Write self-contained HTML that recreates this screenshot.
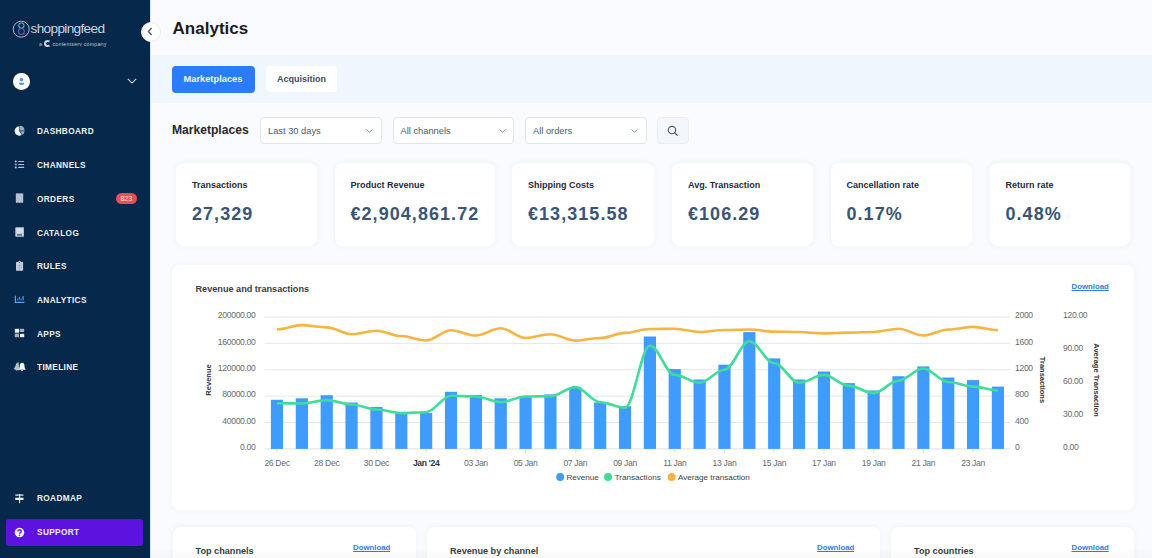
<!DOCTYPE html>
<html><head><meta charset="utf-8">
<style>
*{box-sizing:border-box;margin:0;padding:0}
html,body{width:1152px;height:558px;overflow:hidden;background:#f9fbfe;font-family:"Liberation Sans",sans-serif}
.abs{position:absolute;white-space:nowrap}
#side{position:absolute;left:0;top:0;width:150px;height:558px;background:#06284b}
.nav{position:absolute;left:37px;font-size:9.2px;font-weight:700;color:#eef1f5;letter-spacing:0.4px;line-height:10px;transform:scaleX(0.9);transform-origin:0 0}
.ico{position:absolute}
.card{position:absolute;background:#fff;border-radius:8px;box-shadow:0 0 6px rgba(40,70,120,0.06)}
.klab{position:absolute;left:16px;top:16.3px;font-size:9px;font-weight:700;color:#1e2b3c;line-height:12px}
.kval{position:absolute;left:16px;top:39.7px;font-size:18px;font-weight:700;color:#3a5577;letter-spacing:1.05px;line-height:22px}
.dd{position:absolute;top:117px;height:26.5px;width:121.5px;background:#fff;border:1px solid #dde6f1;border-radius:4px}
.dd span{position:absolute;left:7px;top:7.5px;font-size:9.3px;color:#4b5a6c;line-height:11px}
.dd svg{position:absolute;right:7.5px;top:11px}
.ax{font-family:"Liberation Sans",sans-serif;font-size:8.6px;letter-spacing:-0.33px;fill:#666b70}
.axb{font-weight:700;fill:#333}
.axt{font-family:"Liberation Sans",sans-serif;font-size:7.5px;font-weight:700;fill:#333}
.lg{font-family:"Liberation Sans",sans-serif;font-size:8.1px;fill:#3b3f44}
.dl{position:absolute;font-size:7.8px;font-weight:700;color:#2f7de1;text-decoration:underline;line-height:10px}
.ctitle{position:absolute;font-size:9.15px;font-weight:700;color:#3a3d42;line-height:11px}
</style></head><body>

<!-- main background bands -->
<div class="abs" style="left:150px;top:55px;width:1002px;height:48px;background:#eff6fe"></div>
<div class="abs" style="left:150px;top:0;width:1px;height:558px;background:#dfe3e8"></div>

<div class="abs" style="left:172.6px;top:19px;font-size:17px;font-weight:700;color:#1c1c1e;line-height:20px">Analytics</div>

<div class="abs" style="left:172px;top:65.5px;width:82.5px;height:27px;background:#2a7cfd;border-radius:4px"></div>
<div class="abs" style="left:183.5px;top:74px;font-size:9.3px;font-weight:700;color:#f2f7ff;line-height:11px">Marketplaces</div>
<div class="abs" style="left:266px;top:66px;width:71px;height:25.5px;background:#fff;border-radius:4px"></div>
<div class="abs" style="left:277px;top:74px;font-size:9px;font-weight:700;color:#3c4b63;line-height:11px">Acquisition</div>

<div class="abs" style="left:172px;top:123px;font-size:12.1px;font-weight:700;color:#26282c;line-height:14px">Marketplaces</div>

<div class="dd" style="left:260px"><span>Last 30 days</span><svg width="7" height="4" viewBox="0 0 7 4"><path d="M0.5 0.5 L3.5 3.3 L6.5 0.5" fill="none" stroke="#7d8da3" stroke-width="1"/></svg></div>
<div class="dd" style="left:392.5px"><span>All channels</span><svg width="7" height="4" viewBox="0 0 7 4"><path d="M0.5 0.5 L3.5 3.3 L6.5 0.5" fill="none" stroke="#7d8da3" stroke-width="1"/></svg></div>
<div class="dd" style="left:525px"><span>All orders</span><svg width="7" height="4" viewBox="0 0 7 4"><path d="M0.5 0.5 L3.5 3.3 L6.5 0.5" fill="none" stroke="#7d8da3" stroke-width="1"/></svg></div>
<div class="abs" style="left:657px;top:117px;width:32px;height:26.5px;background:#f3f6fa;border:1px solid #e9eef4;border-radius:4px">
  <svg width="12" height="12" viewBox="0 0 12 12" style="position:absolute;left:9px;top:6.5px"><circle cx="5" cy="5" r="3.7" fill="none" stroke="#4a5b73" stroke-width="1.15"/><path d="M7.7 7.7 L10.6 10.6" stroke="#4a5b73" stroke-width="1.3"/></svg>
</div>

<!-- KPI cards -->
<div class="card" style="left:176px;top:163px;width:141px;height:82.5px"><div class="klab">Transactions</div><div class="kval">27,329</div></div>
<div class="card" style="left:334.5px;top:163px;width:160px;height:82.5px"><div class="klab">Product Revenue</div><div class="kval">€2,904,861.72</div></div>
<div class="card" style="left:512px;top:163px;width:142px;height:82.5px"><div class="klab">Shipping Costs</div><div class="kval">€13,315.58</div></div>
<div class="card" style="left:672px;top:163px;width:140.5px;height:82.5px"><div class="klab">Avg. Transaction</div><div class="kval">€106.29</div></div>
<div class="card" style="left:830.5px;top:163px;width:141px;height:82.5px"><div class="klab">Cancellation rate</div><div class="kval">0.17%</div></div>
<div class="card" style="left:989.5px;top:163px;width:140.5px;height:82.5px"><div class="klab">Return rate</div><div class="kval">0.48%</div></div>

<!-- chart card -->
<div class="card" style="left:172px;top:265px;width:962px;height:245px"></div>
<div class="ctitle" style="left:195.5px;top:284px">Revenue and transactions</div>
<div class="dl" style="left:1071.5px;top:281.5px">Download</div>

<!-- bottom cards -->
<div class="card" style="left:172.5px;top:526.5px;width:243px;height:60px"></div>
<div class="card" style="left:427px;top:526.5px;width:452.5px;height:60px"></div>
<div class="card" style="left:891px;top:526.5px;width:243px;height:60px"></div>
<div class="ctitle" style="left:195.5px;top:545.5px">Top channels</div>
<div class="dl" style="left:353px;top:542.5px">Download</div>
<div class="ctitle" style="left:450px;top:545.5px">Revenue by channel</div>
<div class="dl" style="left:817px;top:542.5px">Download</div>
<div class="ctitle" style="left:914px;top:545.5px">Top countries</div>
<div class="dl" style="left:1071.5px;top:542.5px">Download</div>

<svg width="1152" height="558" viewBox="0 0 1152 558" style="position:absolute;left:0;top:0;pointer-events:none">
<line x1="264.6" y1="317.0" x2="1010.2" y2="317.0" stroke="#e6e6e6" stroke-width="1"/>
<line x1="264.6" y1="343.38" x2="1010.2" y2="343.38" stroke="#e6e6e6" stroke-width="1"/>
<line x1="264.6" y1="369.76" x2="1010.2" y2="369.76" stroke="#e6e6e6" stroke-width="1"/>
<line x1="264.6" y1="396.14" x2="1010.2" y2="396.14" stroke="#e6e6e6" stroke-width="1"/>
<line x1="264.6" y1="422.52" x2="1010.2" y2="422.52" stroke="#e6e6e6" stroke-width="1"/>
<line x1="264.6" y1="448.9" x2="1010.2" y2="448.9" stroke="#e0e0e0" stroke-width="1"/>
<rect x="270.90" y="399.80" width="12.2" height="49.10" fill="#409cfc"/>
<rect x="295.76" y="398.30" width="12.2" height="50.60" fill="#409cfc"/>
<rect x="320.62" y="395.20" width="12.2" height="53.70" fill="#409cfc"/>
<rect x="345.48" y="402.50" width="12.2" height="46.40" fill="#409cfc"/>
<rect x="370.34" y="406.90" width="12.2" height="42.00" fill="#409cfc"/>
<rect x="395.20" y="412.60" width="12.2" height="36.30" fill="#409cfc"/>
<rect x="420.06" y="412.90" width="12.2" height="36.00" fill="#409cfc"/>
<rect x="444.92" y="391.80" width="12.2" height="57.10" fill="#409cfc"/>
<rect x="469.78" y="394.90" width="12.2" height="54.00" fill="#409cfc"/>
<rect x="494.64" y="398.30" width="12.2" height="50.60" fill="#409cfc"/>
<rect x="519.50" y="396.50" width="12.2" height="52.40" fill="#409cfc"/>
<rect x="544.36" y="394.40" width="12.2" height="54.50" fill="#409cfc"/>
<rect x="569.22" y="387.30" width="12.2" height="61.60" fill="#409cfc"/>
<rect x="594.08" y="402.50" width="12.2" height="46.40" fill="#409cfc"/>
<rect x="618.94" y="406.20" width="12.2" height="42.70" fill="#409cfc"/>
<rect x="643.80" y="336.50" width="12.2" height="112.40" fill="#409cfc"/>
<rect x="668.66" y="369.10" width="12.2" height="79.80" fill="#409cfc"/>
<rect x="693.52" y="379.50" width="12.2" height="69.40" fill="#409cfc"/>
<rect x="718.38" y="364.70" width="12.2" height="84.20" fill="#409cfc"/>
<rect x="743.24" y="332.10" width="12.2" height="116.80" fill="#409cfc"/>
<rect x="768.10" y="358.40" width="12.2" height="90.50" fill="#409cfc"/>
<rect x="792.96" y="379.50" width="12.2" height="69.40" fill="#409cfc"/>
<rect x="817.82" y="371.50" width="12.2" height="77.40" fill="#409cfc"/>
<rect x="842.68" y="383.10" width="12.2" height="65.80" fill="#409cfc"/>
<rect x="867.54" y="390.50" width="12.2" height="58.40" fill="#409cfc"/>
<rect x="892.40" y="376.20" width="12.2" height="72.70" fill="#409cfc"/>
<rect x="917.26" y="366.40" width="12.2" height="82.50" fill="#409cfc"/>
<rect x="942.12" y="377.50" width="12.2" height="71.40" fill="#409cfc"/>
<rect x="966.98" y="380.10" width="12.2" height="68.80" fill="#409cfc"/>
<rect x="991.84" y="386.60" width="12.2" height="62.30" fill="#409cfc"/>
<line x1="277.00" y1="448.9" x2="277.00" y2="452.9" stroke="#e0e0e0" stroke-width="1"/>
<line x1="326.72" y1="448.9" x2="326.72" y2="452.9" stroke="#e0e0e0" stroke-width="1"/>
<line x1="376.44" y1="448.9" x2="376.44" y2="452.9" stroke="#e0e0e0" stroke-width="1"/>
<line x1="426.16" y1="448.9" x2="426.16" y2="452.9" stroke="#e0e0e0" stroke-width="1"/>
<line x1="475.88" y1="448.9" x2="475.88" y2="452.9" stroke="#e0e0e0" stroke-width="1"/>
<line x1="525.60" y1="448.9" x2="525.60" y2="452.9" stroke="#e0e0e0" stroke-width="1"/>
<line x1="575.32" y1="448.9" x2="575.32" y2="452.9" stroke="#e0e0e0" stroke-width="1"/>
<line x1="625.04" y1="448.9" x2="625.04" y2="452.9" stroke="#e0e0e0" stroke-width="1"/>
<line x1="674.76" y1="448.9" x2="674.76" y2="452.9" stroke="#e0e0e0" stroke-width="1"/>
<line x1="724.48" y1="448.9" x2="724.48" y2="452.9" stroke="#e0e0e0" stroke-width="1"/>
<line x1="774.20" y1="448.9" x2="774.20" y2="452.9" stroke="#e0e0e0" stroke-width="1"/>
<line x1="823.92" y1="448.9" x2="823.92" y2="452.9" stroke="#e0e0e0" stroke-width="1"/>
<line x1="873.64" y1="448.9" x2="873.64" y2="452.9" stroke="#e0e0e0" stroke-width="1"/>
<line x1="923.36" y1="448.9" x2="923.36" y2="452.9" stroke="#e0e0e0" stroke-width="1"/>
<line x1="973.08" y1="448.9" x2="973.08" y2="452.9" stroke="#e0e0e0" stroke-width="1"/>
<path d="M277.00,329.50 C285.70,329.50 293.16,325.10 301.86,325.10 C310.56,325.10 318.02,327.40 326.72,327.40 C335.42,327.40 342.88,334.20 351.58,334.20 C360.28,334.20 367.74,330.80 376.44,330.80 C385.14,330.80 392.60,336.00 401.30,336.00 C410.00,336.00 417.46,340.40 426.16,340.40 C434.86,340.40 442.32,330.30 451.02,330.30 C459.72,330.30 467.18,335.50 475.88,335.50 C484.58,335.50 492.04,328.20 500.74,328.20 C509.44,328.20 516.90,338.00 525.60,338.00 C534.30,338.00 541.76,334.20 550.46,334.20 C559.16,334.20 566.62,340.60 575.32,340.60 C584.02,340.60 591.48,338.00 600.18,338.00 C608.88,338.00 616.34,332.90 625.04,332.90 C633.74,332.90 641.20,329.00 649.90,329.00 C658.60,329.00 666.06,328.70 674.76,328.70 C683.46,328.70 690.92,332.00 699.62,332.00 C708.32,332.00 715.78,330.00 724.48,330.00 C733.18,330.00 740.64,329.50 749.34,329.50 C758.04,329.50 765.50,331.60 774.20,331.60 C782.90,331.60 790.36,332.00 799.06,332.00 C807.76,332.00 815.22,333.40 823.92,333.40 C832.62,333.40 840.08,332.60 848.78,332.60 C857.48,332.60 864.94,332.00 873.64,332.00 C882.34,332.00 889.80,328.70 898.50,328.70 C907.20,328.70 914.66,335.50 923.36,335.50 C932.06,335.50 939.52,329.50 948.22,329.50 C956.92,329.50 964.38,326.90 973.08,326.90 C981.78,326.90 989.24,330.30 997.94,330.30" fill="none" stroke="#f8b340" stroke-width="2.6" stroke-linecap="butt"/>
<path d="M277.00,403.20 C285.70,403.20 293.16,403.50 301.86,403.50 C310.56,403.50 318.02,400.10 326.72,400.10 C335.42,400.10 342.88,404.50 351.58,404.50 C360.28,404.50 367.74,409.50 376.44,409.50 C385.14,409.50 392.60,413.10 401.30,413.10 C410.00,413.10 417.46,412.20 426.16,412.20 C434.86,412.20 442.32,395.70 451.02,395.70 C459.72,395.70 467.18,396.50 475.88,396.50 C484.58,396.50 492.04,402.20 500.74,402.20 C509.44,402.20 516.90,396.50 525.60,396.50 C534.30,396.50 541.76,396.20 550.46,396.20 C559.16,396.20 566.62,387.10 575.32,387.10 C584.02,387.10 591.48,402.20 600.18,402.20 C608.88,402.20 616.34,407.70 625.04,407.70 C633.74,407.70 641.20,345.80 649.90,345.80 C658.60,345.80 666.06,374.90 674.76,374.90 C683.46,374.90 690.92,382.70 699.62,382.70 C708.32,382.70 715.78,369.70 724.48,369.70 C733.18,369.70 740.64,341.30 749.34,341.30 C758.04,341.30 765.50,363.20 774.20,363.20 C782.90,363.20 790.36,382.70 799.06,382.70 C807.76,382.70 815.22,374.90 823.92,374.90 C832.62,374.90 840.08,385.90 848.78,385.90 C857.48,385.90 864.94,393.10 873.64,393.10 C882.34,393.10 889.80,380.60 898.50,380.60 C907.20,380.60 914.66,368.50 923.36,368.50 C932.06,368.50 939.52,382.00 948.22,382.00 C956.92,382.00 964.38,386.60 973.08,386.60 C981.78,386.60 989.24,390.50 997.94,390.50" fill="none" stroke="#3fdd9a" stroke-width="2.6" stroke-linecap="butt"/>
<text x="255.5" y="318.20" text-anchor="end" class="ax">200000.00</text>
<text x="255.5" y="344.58" text-anchor="end" class="ax">160000.00</text>
<text x="255.5" y="370.96" text-anchor="end" class="ax">120000.00</text>
<text x="255.5" y="397.34" text-anchor="end" class="ax">80000.00</text>
<text x="255.5" y="423.72" text-anchor="end" class="ax">40000.00</text>
<text x="255.5" y="450.10" text-anchor="end" class="ax">0.00</text>
<text x="1015" y="318.20" class="ax">2000</text>
<text x="1015" y="344.58" class="ax">1600</text>
<text x="1015" y="370.96" class="ax">1200</text>
<text x="1015" y="397.34" class="ax">800</text>
<text x="1015" y="423.72" class="ax">400</text>
<text x="1015" y="450.10" class="ax">0</text>
<text x="1063" y="318.00" class="ax">120.00</text>
<text x="1063" y="351.00" class="ax">90.00</text>
<text x="1063" y="384.00" class="ax">60.00</text>
<text x="1063" y="417.00" class="ax">30.00</text>
<text x="1063" y="450.00" class="ax">0.00</text>
<text x="277.00" y="465.5" text-anchor="middle" class="ax">26 Dec</text>
<text x="326.72" y="465.5" text-anchor="middle" class="ax">28 Dec</text>
<text x="376.44" y="465.5" text-anchor="middle" class="ax">30 Dec</text>
<text x="426.16" y="465.5" text-anchor="middle" class="ax axb">Jan '24</text>
<text x="475.88" y="465.5" text-anchor="middle" class="ax">03 Jan</text>
<text x="525.60" y="465.5" text-anchor="middle" class="ax">05 Jan</text>
<text x="575.32" y="465.5" text-anchor="middle" class="ax">07 Jan</text>
<text x="625.04" y="465.5" text-anchor="middle" class="ax">09 Jan</text>
<text x="674.76" y="465.5" text-anchor="middle" class="ax">11 Jan</text>
<text x="724.48" y="465.5" text-anchor="middle" class="ax">13 Jan</text>
<text x="774.20" y="465.5" text-anchor="middle" class="ax">15 Jan</text>
<text x="823.92" y="465.5" text-anchor="middle" class="ax">17 Jan</text>
<text x="873.64" y="465.5" text-anchor="middle" class="ax">19 Jan</text>
<text x="923.36" y="465.5" text-anchor="middle" class="ax">21 Jan</text>
<text x="973.08" y="465.5" text-anchor="middle" class="ax">23 Jan</text>
<text transform="translate(211,380) rotate(-90)" text-anchor="middle" class="axt">Revenue</text>
<text transform="translate(1040,380) rotate(90)" text-anchor="middle" class="axt">Transactions</text>
<text transform="translate(1094,380) rotate(90)" text-anchor="middle" class="axt">Average Transaction</text>
<circle cx="560.2" cy="477" r="4" fill="#409cfc"/>
<text x="566.4" y="479.8" class="lg">Revenue</text>
<circle cx="608" cy="477" r="4" fill="#3fdd9a"/>
<text x="614.7" y="479.8" class="lg">Transactions</text>
<circle cx="671.7" cy="477" r="4" fill="#f8b340"/>
<text x="678" y="479.8" class="lg">Average transaction</text>
</svg>

<div class="abs" style="left:150px;top:548px;width:1002px;height:10px;background:linear-gradient(rgba(0,0,0,0),rgba(0,0,0,0.025))"></div>

<!-- sidebar -->
<div id="side">
  <!-- logo -->
  <svg class="ico" style="left:12px;top:19px" width="20" height="20" viewBox="0 0 20 20">
    <circle cx="9.2" cy="10.2" r="8" fill="none" stroke="#aeb9c9" stroke-width="1"/>
    <circle cx="9.4" cy="6.6" r="2.6" fill="none" stroke="#57a9d2" stroke-width="1.1"/>
    <circle cx="9.4" cy="12.4" r="2.9" fill="none" stroke="#6b5cc0" stroke-width="1.1"/>
  </svg>
  <div class="abs" style="left:30.5px;top:20.5px;font-size:13.6px;color:#cdd5e1;letter-spacing:-0.65px;line-height:16px;font-weight:400">shoppingfeed<span style="font-size:5px">.</span></div>
  <div class="abs" style="left:39px;top:40px;font-size:5.2px;color:#c0c9d6;line-height:6px;letter-spacing:0.25px">a <span style="display:inline-block;width:7px;height:7px;border-radius:50%;border:2px solid #c9d1dc;border-right-color:transparent;vertical-align:-1.5px"></span> contentserv company</div>

  <!-- user -->
  <div class="abs" style="left:13.4px;top:73.3px;width:16.5px;height:16.5px;border-radius:50%;background:#fff"></div>
  <svg class="ico" style="left:17px;top:76px" width="9" height="10" viewBox="0 0 9 10"><circle cx="4.45" cy="3.65" r="1.8" fill="#4f98f8"/><path d="M1.9,6.8 L7.2,6.8 Q7.2,9.1 4.55,9.1 Q1.9,9.1 1.9,6.8 Z" fill="#4f98f8"/></svg>
  <svg class="ico" style="left:127px;top:78px" width="10" height="6" viewBox="0 0 10 6"><path d="M0.8 0.8 L5 5 L9.2 0.8" fill="none" stroke="#d5dce6" stroke-width="1.05"/></svg>

  <!-- nav -->

  <div class="nav" style="top:126px">DASHBOARD</div>

  <div class="nav" style="top:160px">CHANNELS</div>

  <div class="nav" style="top:193.5px">ORDERS</div>
  <div class="abs" style="left:116px;top:193px;width:20.6px;height:11px;border-radius:6px;background:#ec4d4d;color:#fde7e7;font-size:7px;line-height:12px;text-align:center">823</div>

  <div class="nav" style="top:227.5px">CATALOG</div>

  <div class="nav" style="top:261px">RULES</div>

  <div class="nav" style="top:294.5px">ANALYTICS</div>

  <div class="nav" style="top:328.5px">APPS</div>

  <div class="nav" style="top:362px">TIMELINE</div>

  <div class="nav" style="top:492.7px">ROADMAP</div>

  <div class="abs" style="left:6px;top:519px;width:137px;height:26.5px;border-radius:3px;background:#5d12df"></div>
<svg style="position:absolute;left:0;top:0" width="150" height="558" viewBox="0 0 150 558">
  <!-- dashboard pie -->
  <path d="M19.3,131 L19.3,126.3 A4.7,4.7 0 1 0 21.65,135.07 Z" fill="#f4f6f9"/>
  <path d="M19.9,130.4 L19.9,125.7 A4.7,4.7 0 0 1 24.6,130.4 Z" fill="#9eadc0"/>
  <path d="M20.2,131.3 L24.6,131.3 A4.4,4.4 0 0 1 22.5,135 Z" fill="#9eadc0"/>
  <!-- channels list -->
  <circle cx="15.7" cy="161.45" r="0.95" fill="#f4f6f9"/><circle cx="15.7" cy="164.5" r="0.95" fill="#f4f6f9"/><circle cx="15.7" cy="167.4" r="0.95" fill="#f4f6f9"/>
  <rect x="15.4" y="161.5" width="0.6" height="6" fill="#3f5676"/>
  <rect x="18.1" y="160.9" width="6.1" height="1.1" rx="0.5" fill="#b4c0cf"/><rect x="18.1" y="163.95" width="6.1" height="1.1" rx="0.5" fill="#b4c0cf"/><rect x="18.1" y="166.85" width="6.1" height="1.1" rx="0.5" fill="#b4c0cf"/>
  <!-- orders receipt -->
  <path d="M15.8,193.6 L16.9,193.2 L18,193.6 L19.5,193.2 L21,193.6 L22.1,193.2 L23.2,193.6 L23.2,202.5 L22.1,202.9 L21,202.5 L19.5,202.9 L18,202.5 L16.9,202.9 L15.8,202.5 Z" fill="#b5c0cd"/>
  <!-- catalog book -->
  <path d="M15.3,228.2 Q15.3,227.2 16.3,227.2 L23.9,227.2 L23.9,236.8 L16.3,236.8 Q15.3,236.8 15.3,235.8 Z" fill="#c3ccd8"/>
  <rect x="16.5" y="228.2" width="6.6" height="4.8" fill="#d6dde6"/>
  <rect x="17.1" y="234" width="4.8" height="1.7" fill="#5f728b"/>
  <!-- rules clipboard -->
  <rect x="16" y="262" width="7.1" height="8.7" rx="0.6" fill="#c8d0db"/>
  <path d="M18,262.5 Q18,260.8 19.55,260.8 Q21.1,260.8 21.1,262.5 Z" fill="#c8d0db"/>
  <circle cx="19.55" cy="262.3" r="0.6" fill="#2a4565"/>
  <rect x="16.6" y="265" width="5.9" height="0.5" fill="#95a4b7"/><rect x="16.6" y="267.6" width="5.9" height="0.5" fill="#95a4b7"/><rect x="19.3" y="263.5" width="0.5" height="6.5" fill="#95a4b7"/>
  <!-- analytics -->
  <path d="M15.4,295.8 L15.4,302.3 L24.4,302.3" fill="none" stroke="#64a0f2" stroke-width="1.2"/>
  <rect x="16.9" y="298.7" width="1.2" height="1.6" fill="#2f7ff0"/>
  <rect x="18.7" y="296.8" width="1.3" height="3.5" fill="#2f7ff0"/>
  <rect x="20.6" y="298.4" width="1.2" height="1.9" fill="#2f7ff0"/>
  <rect x="22.3" y="296" width="1.6" height="4.3" fill="#2f7ff0"/>
  <!-- apps -->
  <rect x="14.8" y="328.8" width="4.2" height="3.9" fill="#f4f6f9"/>
  <rect x="19.7" y="328.8" width="4.5" height="3.3" fill="#a3b1c3"/>
  <rect x="14.8" y="333.6" width="4.2" height="3.6" fill="#a3b1c3"/>
  <rect x="20" y="333.9" width="4.2" height="3.3" fill="#f4f6f9"/>
  <!-- timeline bells -->
  <path d="M13.6,368.8 Q15.2,367.8 15.6,365.2 Q16.2,362.4 18.6,362.2 L19.2,370.2 L16.5,370.6 Z" fill="#b3bfcd"/>
  <path d="M18.4,369.8 Q19.7,368.6 19.7,366 Q19.8,362.8 22.1,362.8 Q24.4,362.8 24.5,366 Q24.5,368.6 25.8,369.8 Z" fill="#f4f6f9"/>
  <circle cx="22.1" cy="370.3" r="0.9" fill="#f4f6f9"/>
  <!-- roadmap -->
  <rect x="15.3" y="494.3" width="8.2" height="1.6" fill="#b8c2cf"/>
  <rect x="15.3" y="497.7" width="8.2" height="2.3" fill="#f4f6f9"/>
  <rect x="19" y="494" width="1.1" height="9.2" fill="#e8ecf1"/>
  <!-- support -->
  <circle cx="19.5" cy="532.6" r="4.75" fill="#f7f4fe"/>
  <path d="M17.8,531.5 Q17.8,529.7 19.5,529.7 Q21.3,529.7 21.3,531.3 Q21.3,532.3 20.1,532.8 Q19.5,533.1 19.5,533.8" fill="none" stroke="#5d12df" stroke-width="1.4"/>
  <circle cx="19.5" cy="535.3" r="0.8" fill="#5d12df"/>
</svg>

  <div class="nav" style="top:526.5px">SUPPORT</div>
</div>

<!-- collapse button -->
<div class="abs" style="left:140.5px;top:21.5px;width:20px;height:20px;border-radius:50%;background:#fff;border:1px solid #e3e9f1"></div>
<svg class="abs" style="left:146px;top:27px" width="8" height="9" viewBox="0 0 8 9"><path d="M5.6 1 L2.4 4.5 L5.6 8" fill="none" stroke="#4b5d78" stroke-width="1.4"/></svg>

</body></html>
